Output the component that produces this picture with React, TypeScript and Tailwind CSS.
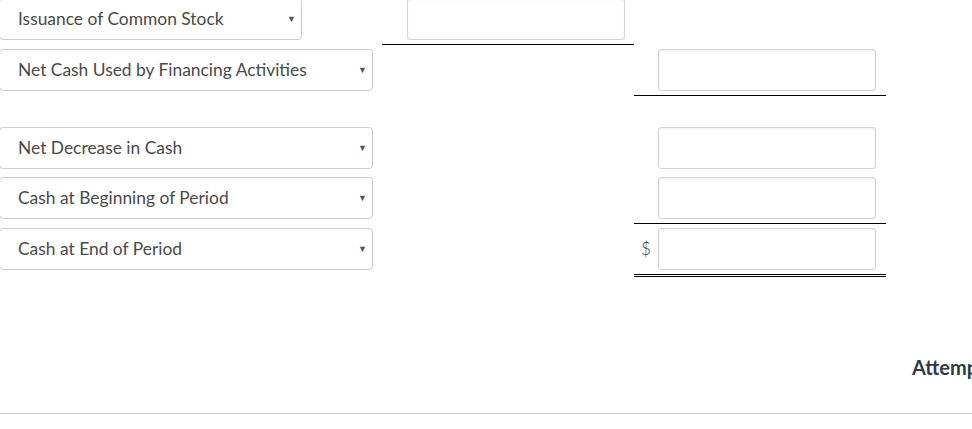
import React from 'react';

const font = { fontFamily: 'Lato, "Open Sans", sans-serif' };

function Select({ label, width }: { label: string; width: string }) {
  return (
    <div
      className={`${width} h-[42px] -ml-px flex items-center justify-between pl-[18px] pr-[5px] border border-[#c7cdd1] rounded-[4px] bg-white text-[17.4px] text-[#4a4a4a]`}
    >
      <span className="whitespace-nowrap">{label}</span>
      <span className="text-[9px] text-[#555]">▼</span>
    </div>
  );
}

function Field() {
  return (
    <div className="w-[218px] h-[42px] border border-[#cfd3d6] rounded-[3px] bg-white shadow-[inset_0_1px_2px_rgba(0,0,0,0.06)]" />
  );
}

type Row = {
  label: string;
  width: string;
  col: 1 | 2;
  line?: 'single' | 'double';
  dollar?: boolean;
};

function LineRow({ row }: { row: Row }) {
  const lineCls =
    row.line === 'single'
      ? 'border-b border-black'
      : row.line === 'double'
      ? 'border-b-[3px] border-double border-black'
      : '';
  return (
    <div className="flex">
      <div className="w-[382px] pt-[4px]">
        <Select label={row.label} width={row.width} />
      </div>
      <div className={`w-[252px] pt-[4px] pb-[4px] pl-[25px] ${row.col === 1 ? lineCls : ''}`}>
        {row.col === 1 && <Field />}
      </div>
      <div className={`w-[252px] pt-[4px] pb-[4px] flex ${row.col === 2 ? lineCls : ''}`}>
        {row.col === 2 && (
          <>
            <div className="w-[24px] flex items-center justify-center text-[17px] font-light text-[#2d3b45]">
              {row.dollar ? '$' : ''}
            </div>
            <Field />
          </>
        )}
      </div>
    </div>
  );
}

export default function App() {
  const top: Row[] = [
    { label: 'Issuance of Common Stock', width: 'w-[303px]', col: 1, line: 'single' },
    { label: 'Net Cash Used by Financing Activities', width: 'w-[374px]', col: 2, line: 'single' },
  ];
  const bottom: Row[] = [
    { label: 'Net Decrease in Cash', width: 'w-[374px]', col: 2 },
    { label: 'Cash at Beginning of Period', width: 'w-[374px]', col: 2, line: 'single' },
    { label: 'Cash at End of Period', width: 'w-[374px]', col: 2, line: 'double', dollar: true },
  ];
  return (
    <div className="w-[972px] h-[429px] overflow-hidden bg-white" style={font}>
      <div className="-mt-[6px]">
        {top.map((r) => (
          <LineRow key={r.label} row={r} />
        ))}
        <div className="h-[27px]" />
        {bottom.map((r) => (
          <LineRow key={r.label} row={r} />
        ))}
      </div>
      <div className="mt-[76px] pl-[912px] whitespace-nowrap text-[20px] leading-[28px] font-bold text-[#2d3b45]">
        Attempts: 0 of 3 used
      </div>
      <div className="mt-[32px] border-b border-[#c7cdd1]" />
    </div>
  );
}
